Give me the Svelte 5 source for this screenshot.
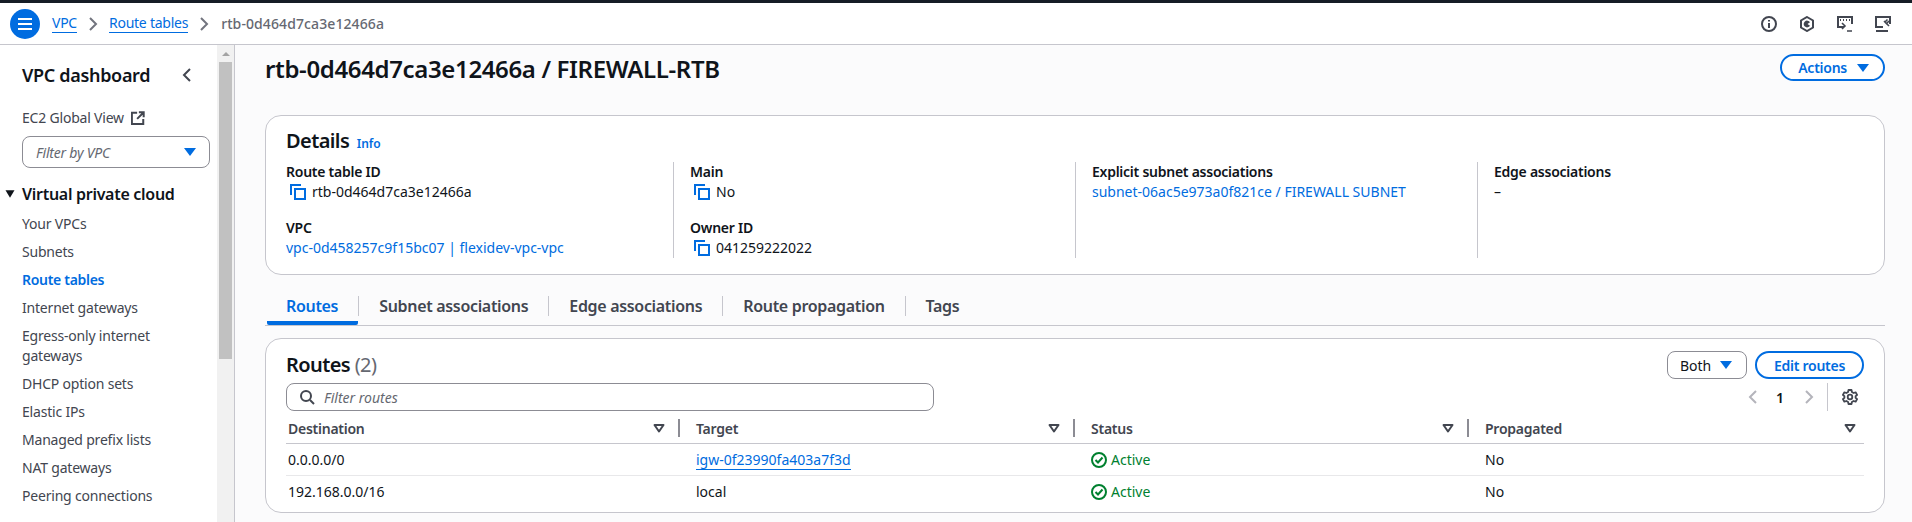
<script>
  const navItems = [
    { label: 'Your VPCs' },
    { label: 'Subnets' },
    { label: 'Route tables', active: true },
    { label: 'Internet gateways' },
    { label: 'Egress-only internet gateways' },
    { label: 'DHCP option sets' },
    { label: 'Elastic IPs' },
    { label: 'Managed prefix lists' },
    { label: 'NAT gateways' },
    { label: 'Peering connections' }
  ]
  const tabs = ['Routes', 'Subnet associations', 'Edge associations', 'Route propagation', 'Tags']
  const columns = ['Destination', 'Target', 'Status', 'Propagated']
  const routes = [
    { dest: '0.0.0.0/0', target: 'igw-0f23990fa403a7f3d', link: true },
    { dest: '192.168.0.0/16', target: 'local', link: false }
  ]
</script>

{#snippet copyIcon()}
  <svg class="copy" viewBox="0 0 16 16" width="16" height="16" fill="none" stroke="#006ce0" stroke-width="2">
    <path d="M1 11V1h10" />
    <rect x="5" y="5" width="10" height="10" />
  </svg>
{/snippet}

{#snippet caret()}
  <svg class="caret" viewBox="0 0 16 16" width="16" height="16"><path d="M2 4h12L8 12z" fill="#006ce0" /></svg>
{/snippet}

{#snippet sortIcon()}
  <svg viewBox="0 0 16 16" width="16" height="16" fill="none" stroke="#424650" stroke-width="2" stroke-linejoin="round"><path d="M3.5 5h9L8 11.5z" /></svg>
{/snippet}

{#snippet statusOk()}
  <span class="status">
    <svg viewBox="0 0 16 16" width="16" height="16" fill="none" stroke="#00802f" stroke-width="2"><circle cx="8" cy="8" r="7" /><path d="M4.5 8l2.5 2.5L11.5 5.5" /></svg>
    Active
  </span>
{/snippet}

<div class="topstrip"></div>
<header class="topbar">
  <button class="menu" aria-label="Menu">
    <svg viewBox="0 0 16 16" width="16" height="16" stroke="#fff" stroke-width="2"><path d="M1 3h14M1 8h14M1 13h14" /></svg>
  </button>
  <nav class="crumbs">
    <a href="#vpc">VPC</a>
    <svg viewBox="0 0 16 16" width="16" height="16" fill="none" stroke="#72747e" stroke-width="2"><path d="M5 2l6 6-6 6" /></svg>
    <a href="#rt">Route tables</a>
    <svg viewBox="0 0 16 16" width="16" height="16" fill="none" stroke="#72747e" stroke-width="2"><path d="M5 2l6 6-6 6" /></svg>
    <span>rtb-0d464d7ca3e12466a</span>
  </nav>
  <div class="tools">
    <svg viewBox="0 0 16 16" width="16" height="16" fill="none" stroke="#424650" stroke-width="2"><circle cx="8" cy="8" r="7" /><path d="M8 7v5M8 4v1.6" /></svg>
    <svg viewBox="0 0 16 16" width="16" height="16" fill="none" stroke="#424650" stroke-width="2"><path d="M8 1l6 3.5v7L8 15l-6-3.5v-7z" /><path d="M11 6.3A3.4 3.4 0 1 0 11 9.7L8.5 8z" fill="#424650" stroke="none" /></svg>
    <svg viewBox="0 0 16 16" width="16" height="16" fill="none" stroke="#424650" stroke-width="2"><path d="M7 11H1V1h14v7" /><path d="M3 4h1M6 4h1M9 4h1M12 4h1" /><path d="M5 7l3 3-3 3M10 15h5" stroke-width="1.6" /></svg>
    <svg viewBox="0 0 16 16" width="16" height="16" fill="none" stroke="#424650" stroke-width="2"><path d="M8 11H1V1h14v7" /><path d="M1 15h12" /><path d="M9 5l5 5M12.5 3.5L10 6l1.5 1.5L14 5" stroke-width="1.6" /></svg>
  </div>
</header>

<div class="body">
  <aside class="side">
    <div class="side-head">
      <h2>VPC dashboard</h2>
      <svg viewBox="0 0 16 16" width="16" height="16" fill="none" stroke="#424650" stroke-width="2"><path d="M11 2L5 8l6 6" /></svg>
    </div>
    <div class="global">
      EC2 Global View
      <svg viewBox="0 0 16 16" width="14" height="14" fill="none" stroke="#424650" stroke-width="2.300"><path d="M7 2H1v13h13V9" /><path d="M9 1.500h5.500V7M14 2L7 9" /></svg>
    </div>
    <div class="vpc-filter">
      <em>Filter by VPC</em>
      {@render caret()}
    </div>
    <div class="section">
      <svg viewBox="0 0 16 16" width="12" height="12"><path d="M2 3h12L8 13z" fill="#0f141a" /></svg>
      Virtual private cloud
    </div>
    <ul>
      {#each navItems as item}
        <li class:active={item.active}>{item.label}</li>
      {/each}
    </ul>
  </aside>
  <div class="scrollbar"><div class="arrow"></div><div class="thumb"></div></div>

  <main>
    <div class="title-row">
      <h1>rtb-0d464d7ca3e12466a / FIREWALL-RTB</h1>
      <button class="pill">Actions {@render caret()}</button>
    </div>

    <section class="card details">
      <h2>Details <a class="info" href="#info">Info</a></h2>
      <div class="cols">
        <div class="col">
          <div class="field">
            <strong>Route table ID</strong>
            <span class="val">{@render copyIcon()}rtb-0d464d7ca3e12466a</span>
          </div>
          <div class="field">
            <strong>VPC</strong>
            <a href="#v">vpc-0d458257c9f15bc07 | flexidev-vpc-vpc</a>
          </div>
        </div>
        <div class="col">
          <div class="field">
            <strong>Main</strong>
            <span class="val">{@render copyIcon()}No</span>
          </div>
          <div class="field">
            <strong>Owner ID</strong>
            <span class="val">{@render copyIcon()}041259222022</span>
          </div>
        </div>
        <div class="col">
          <div class="field">
            <strong>Explicit subnet associations</strong>
            <a href="#s">subnet-06ac5e973a0f821ce / FIREWALL SUBNET</a>
          </div>
        </div>
        <div class="col">
          <div class="field">
            <strong>Edge associations</strong>
            <span>–</span>
          </div>
        </div>
      </div>
    </section>

    <div class="tabs">
      {#each tabs as tab, i}
        <div class="tab" class:on={i === 0}><span>{tab}</span></div>
      {/each}
    </div>

    <section class="card routes">
      <div class="routes-head">
        <h2>Routes <span>(2)</span></h2>
        <div class="actions">
          <div class="both">Both {@render caret()}</div>
          <button class="pill edit">Edit routes</button>
        </div>
      </div>
      <div class="filter-row">
        <div class="filter">
          <svg viewBox="0 0 16 16" width="16" height="16" fill="none" stroke="#424650" stroke-width="2"><circle cx="7" cy="7" r="5" /><path d="M11 11l4 4" /></svg>
          <em>Filter routes</em>
        </div>
        <div class="pager">
          <svg viewBox="0 0 16 16" width="16" height="16" fill="none" stroke="#b4b4bb" stroke-width="2"><path d="M11 2L5 8l6 6" /></svg>
          <b>1</b>
          <svg viewBox="0 0 16 16" width="16" height="16" fill="none" stroke="#b4b4bb" stroke-width="2"><path d="M5 2l6 6-6 6" /></svg>
          <i></i>
          <svg viewBox="0 0 16 16" width="16" height="16" fill="none" stroke="#424650" stroke-width="1.800" stroke-linejoin="round"><circle cx="8" cy="8" r="2.300" /><path d="M6.500 1h3l.4 2 1.700 1 2-.7 1.500 2.600-1.500 1.300v1.600l1.500 1.300-1.500 2.600-2-.7-1.700 1-.4 2h-3l-.4-2-1.700-1-2 .7-1.500-2.600 1.500-1.300V7.200L.9 5.900l1.500-2.600 2 .7 1.700-1z" /></svg>
        </div>
      </div>
      <div class="grid head">
        {#each columns as col, i}
          <div class="th">
            <span>{col}</span>
            {@render sortIcon()}
            {#if i < 3}<i></i>{/if}
          </div>
        {/each}
      </div>
      {#each routes as route}
        <div class="grid row">
          <div>{route.dest}</div>
          <div>{#if route.link}<a class="under" href="#t">{route.target}</a>{:else}{route.target}{/if}</div>
          <div>{@render statusOk()}</div>
          <div>No</div>
        </div>
      {/each}
    </section>
  </main>
</div>

<style>
  :global(body) {
    background: #fff;
    font-family: "Noto Sans", "Open Sans", sans-serif;
    font-size: 14px;
    color: #0f141a;
    overflow: hidden;
  }
  svg { flex: none; display: block; }
  a { color: #006ce0; text-decoration: none; }
  h1, h2 { margin: 0; }

  .topstrip { height: 3px; background: #161d26; }
  .topbar {
    height: 41px;
    display: flex;
    align-items: center;
    padding: 0 10px;
    background: #fff;
    border-bottom: 1px solid #c6c6cd;
    box-sizing: content-box;
  }
  .menu {
    width: 30px;
    height: 30px;
    border: 0;
    padding: 0;
    border-radius: 50%;
    background: #006ce0;
    display: flex;
    align-items: center;
    justify-content: center;
    margin-right: 12px;
  }
  .crumbs { display: flex; align-items: center; gap: 8px; font-size: 14px; color: #656871; }
  .crumbs a { border-bottom: 1px solid #006ce0; line-height: 18px; letter-spacing: -0.25px; }
  .crumbs span { margin-left: 1px; font-weight: 500; letter-spacing: 0.1px; }
  .tools { margin-left: auto; display: flex; gap: 22px; padding-right: 11px; }

  .body { display: flex; height: 477px; overflow: hidden; }
  .side {
    width: 217px;
    flex: none;
    padding: 0 0 0 22px;
    box-sizing: border-box;
    background: #fff;
    color: #424650;
    letter-spacing: -0.2px;
  }
  .side-head {
    display: flex;
    align-items: center;
    justify-content: space-between;
    margin-top: 18px;
    padding-right: 22px;
    height: 24px;
  }
  .side-head h2 { font-size: 18px; font-weight: 600; color: #0f141a; line-height: 24px; letter-spacing: -0.018em; }
  .global { display: flex; align-items: center; gap: 7px; margin-top: 21px; line-height: 20px; }
  .vpc-filter {
    width: 188px;
    height: 32px;
    margin-top: 8px;
    border: 1px solid #8c8c94;
    border-radius: 8px;
    box-sizing: border-box;
    display: flex;
    align-items: center;
    justify-content: space-between;
    padding: 0 11px 0 13px;
    color: #656871;
  }
  .section {
    display: flex;
    align-items: center;
    gap: 6px;
    margin: 15px 0 0 -18px;
    font-size: 16px;
    font-weight: 600;
    color: #0f141a;
    line-height: 22px;
    letter-spacing: -0.018em;
  }
  ul { list-style: none; margin: 9px 0 0; padding: 0 22px 0 0; }
  li { line-height: 20px; margin-bottom: 8px; }
  li.active { color: #006ce0; font-weight: 600; letter-spacing: -0.3px; }

  .scrollbar { flex: none; width: 18px; background: #f1f1f1; padding-left: 2px; box-sizing: border-box; border-right: 1px solid #c6c6cd; }
  .arrow { height: 17px; display: flex; align-items: center; justify-content: center; width: 13px; }
  .arrow::before { content: ""; border: 4px solid transparent; border-top: 0; border-bottom: 4px solid #a3a3a3; }
  .thumb { width: 13px; height: 297px; background: #c1c1c1; }

  main {
    flex: 1;
    min-width: 0;
    background: #fbfbfc;
    padding: 0 27px 0 30px;
    overflow: hidden;
  }
  .title-row {
    display: flex;
    justify-content: space-between;
    align-items: flex-start;
    height: 70px;
  }
  .title-row h1 { font-size: 24px; line-height: 30px; font-weight: 600; margin-top: 9px; letter-spacing: -0.015em; }
  .pill {
    font: inherit;
    font-weight: 600;
    letter-spacing: -0.018em;
    color: #006ce0;
    background: #fff;
    border: 2px solid #006ce0;
    border-radius: 20px;
    height: 28px;
    padding: 0 12px 0 16px;
    display: flex;
    align-items: center;
    gap: 8px;
    white-space: nowrap;
  }
  .title-row .pill { margin-top: 9px; height: 27px; }
  .edit { width: 109px; padding: 0; justify-content: center; }

  .card { background: #fff; border: 1px solid #c6c6cd; border-radius: 16px; box-sizing: border-box; }
  .details { height: 160px; padding: 12px 20px 0; }
  .details h2 { font-size: 20px; line-height: 26px; height: 26px; font-weight: 600; letter-spacing: -0.03em; }
  .info { font-size: 12px; margin-left: 3px; font-weight: 600; letter-spacing: 0; }
  .cols { display: grid; grid-template-columns: 388px 402px 402px 1fr; margin-top: 8px; }
  .col { border-right: 1px solid #c6c6cd; height: 96px; box-sizing: border-box; }
  .col + .col { padding-left: 16px; }
  .col:last-child { border-right: 0; }
  .field { display: flex; flex-direction: column; line-height: 20px; margin-bottom: 16px; }
  .field strong { font-weight: 600; letter-spacing: -0.018em; }
  .val { display: flex; align-items: center; gap: 6px; padding-left: 4px; }
  .copy { width: 16px; height: 16px; }

  .tabs { display: flex; align-items: flex-start; height: 51px; padding-top: 21px; box-sizing: border-box; border-bottom: 1px solid #c6c6cd; font-size: 16px; font-weight: 600; color: #424650; letter-spacing: -0.02em; }
  .tab { padding: 0 0 0 20px; height: 29px; box-sizing: border-box; display: flex; }
  .tab span { padding-right: 20px; height: 20px; border-right: 1px solid #c6c6cd; line-height: 20px; }
  .tab:last-child span { border-right: 0; }
  .tab.on { color: #006ce0; border-bottom: 4px solid #006ce0; border-radius: 2px; padding-left: 19px; margin-left: 2px; }
  .tab.on span { border-right: 0; }
  .tab.on + .tab { border-left: 1px solid #c6c6cd; height: 20px; }

  .routes { margin-top: 12px; height: 175px; padding: 12px 20px 0; }
  .routes-head { display: flex; justify-content: space-between; align-items: center; height: 28px; }
  .routes-head h2 { font-size: 20px; line-height: 26px; font-weight: 600; letter-spacing: -0.03em; }
  .routes-head h2 span { font-weight: 400; color: #656871; }
  .actions { display: flex; gap: 8px; }
  .both { width: 80px; height: 28px; border: 1px solid #8c8c94; border-radius: 8px; padding: 0 12px; display: flex; align-items: center; justify-content: space-between; box-sizing: border-box; }
  .filter-row { display: flex; justify-content: space-between; align-items: center; height: 28px; margin-top: 4px; }
  .filter { width: 648px; height: 28px; box-sizing: border-box; border: 1px solid #8c8c94; border-radius: 8px; display: flex; align-items: center; gap: 9px; padding: 0 12px; color: #656871; }
  .pager { display: flex; align-items: center; padding-right: 6px; }
  .pager b { font-weight: 600; width: 20px; text-align: center; margin: 0 11px 0 9px; }
  .pager i { width: 1px; height: 28px; background: #c6c6cd; margin: 0 14px 0 10px; }

  .grid { display: grid; grid-template-columns: 394px 395px 394px 1fr; }
  .grid > div { padding-left: 16px; }
  .grid > div:first-child { padding-left: 2px; }
  .head { border-bottom: 1px solid #c6c6cd; height: 33px; box-sizing: border-box; }
  .th { display: flex; align-items: center; font-weight: 600; color: #424650; padding-top: 2px; letter-spacing: -0.018em; }
  .th:last-child { padding-right: 6px; }
  .th span { flex: 1; }
  .th i { width: 2px; height: 18px; background: #8c8c94; margin-left: 11px; }
  .row { height: 32px; box-sizing: border-box; align-items: center; border-bottom: 1px solid #e8e8ea; }
  .row:last-child { border-bottom: 0; height: 31px; }
  .under { border-bottom: 1px solid #006ce0; line-height: 18px; display: inline-block; }
  .status { display: flex; align-items: center; gap: 4px; color: #00802f; }
</style>
